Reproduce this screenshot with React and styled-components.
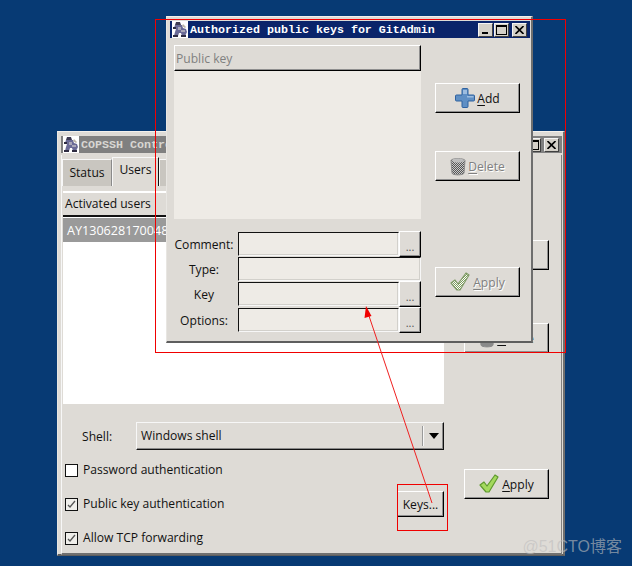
import React from "react";
import styled, { createGlobalStyle } from "styled-components";

const GlobalStyle = createGlobalStyle`
  * { box-sizing: border-box; }
  body {
    margin: 0;
    background: #073a74;
    overflow: hidden;
    font-family: "Open Sans", "DejaVu Sans", sans-serif;
    font-size: 12.1px;
    color: #111;
  }
`;

const Desktop = styled.div`
  position: relative;
  width: 632px;
  height: 566px;
  overflow: hidden;
  background: #073a74;
`;

// windows sit on the desktop at their own place
const Window = styled.div`
  position: absolute;
  left: ${(p) => p.$x}px;
  top: ${(p) => p.$y}px;
  width: ${(p) => p.$w}px;
  height: ${(p) => p.$h}px;
  padding: 4px 1px 3px 3px;
  background: #dedbd6;
  border-top: 1px solid #f2f0ec;
  border-left: 1px solid #e8e6e2;
  border-right: 2px solid #6e6e6e;
  border-bottom: 2px solid #5e5e5e;
`;

const TitleBar = styled.div`
  display: flex;
  align-items: center;
  height: 17px;
  padding-right: 3px;
  background: ${(p) => (p.$active ? "#0a246a" : "#808080")};
  overflow: hidden;
`;

const TitleText = styled.span`
  flex: 1;
  margin-left: 2px;
  font-family: "Liberation Mono", monospace;
  font-size: 11.67px;
  font-weight: 700;
  white-space: nowrap;
  color: ${(p) => (p.$active ? "#ffffff" : "#d8d6d2")};
`;

const CtlButton = styled.div`
  display: flex;
  align-items: center;
  justify-content: center;
  width: 15px;
  height: 14px;
  margin-left: ${(p) => p.$gap || 0}px;
  background: #d4d0c8;
  border: 1px solid;
  border-color: #f4f4f4 #404040 #404040 #f4f4f4;
`;

const Frame = styled.div`
  height: 400px;
  border-left: 1px solid #f7f7f7;
  border-right: 1px solid #808080;
  border-bottom: 2px solid #707070;
`;

const Tabs = styled.div`
  display: flex;
  align-items: flex-end;
  height: 31px;
  margin-top: 2px;
`;

const Tab = styled.div`
  display: flex;
  align-items: center;
  justify-content: center;
  width: ${(p) => p.$w}px;
  height: ${(p) => (p.$current ? 29 : 27)}px;
  padding-bottom: ${(p) => (p.$current ? 5 : 2)}px;
  background: ${(p) => (p.$current ? "#dedbd6" : "#c9c6c0")};
  border-top: 1px solid #f7f7f7;
  border-left: 1px solid #f7f7f7;
  border-right: ${(p) => (p.$current ? "1px solid #111" : "1px solid #8a8a8a")};
`;

const MainGrid = styled.div`
  display: grid;
  grid-template-columns: 381px 85px;
  column-gap: 20px;
  margin: 5px 0 0 1px;
`;

const UserList = styled.div`
  height: 213px;
  padding: 2px 0 0;
  background: #ffffff;
`;

const ListHead = styled.div`
  display: flex;
  align-items: center;
  height: 24px;
  padding: 0 0 2px 2px;
  background: #dedbd6;
  border-bottom: 2px solid #111;
`;

const ListRow = styled.div`
  display: flex;
  align-items: center;
  height: 24px;
  margin-top: 1px;
  padding-left: 4px;
  background: #9a9a9a;
  color: #ffffff;
  font-size: 12.6px;
  white-space: nowrap;
  overflow: hidden;
`;

const ShellRow = styled.div`
  display: flex;
  align-items: center;
  height: 28px;
  margin-top: 18px;
  padding-left: 19px;
`;

const ShellLabel = styled.span`
  width: 54px;
`;

const Combo = styled.div`
  display: flex;
  align-items: center;
  justify-content: space-between;
  flex: 1;
  height: 28px;
  padding: 0 0 1px 4px;
  background: #dedbd6;
  border: 1px solid;
  border-color: #f7f7f7 #111 #111 #f7f7f7;
  box-shadow: inset 0 -1px 0 #8a8a8a, inset -1px 0 0 #8a8a8a;
`;

const ComboArrow = styled.div`
  display: flex;
  align-items: center;
  justify-content: center;
  width: 20px;
  height: 20px;
  border-left: 1px solid #f7f7f7;
  box-shadow: -1px 0 0 #9a9a9a;

  &::after {
    content: "";
    border-left: 5.5px solid transparent;
    border-right: 5.5px solid transparent;
    border-top: 6px solid #000;
  }
`;

const CheckRows = styled.div`
  margin-top: 3px;
`;

const CheckRow = styled.div`
  display: flex;
  align-items: center;
  height: 34px;
  padding-left: 2px;
`;

const CheckBox = styled.div`
  display: flex;
  align-items: center;
  justify-content: center;
  width: 13px;
  height: 13px;
  margin-right: 5px;
  background: ${(p) => (p.$on ? "#efeeea" : "#ffffff")};
  border: 1px solid #111;
`;

const CheckLabel = styled.span`
  flex: 1;
  padding-bottom: 2px;
`;

const Button = styled.div`
  display: flex;
  align-items: center;
  justify-content: center;
  gap: ${(p) => p.$gap ?? 2}px;
  height: ${(p) => p.$h || 30}px;
  margin-top: ${(p) => p.$mt || 0}px;
  background: #dedbd6;
  border: 1px solid;
  border-color: #ffffff #000000 #000000 #ffffff;
  box-shadow: inset -1px -1px 0 #8f8f8f;
  color: ${(p) => (p.$disabled ? "#808080" : "#111")};
  text-shadow: ${(p) => (p.$disabled ? "1px 1px 0 #ffffff" : "none")};
  u { text-underline-offset: 2px; }
`;

const KeysButton = styled(Button)`
  width: 47px;
`;

const ButtonColumn = styled.div`
  display: flex;
  flex-direction: column;
`;

const KeyGrid = styled.div`
  display: grid;
  grid-template-columns: 247px 85px;
  column-gap: 14px;
  margin-top: 7px;
  margin-left: 4px;
`;

const KeyHead = styled.div`
  display: flex;
  align-items: center;
  height: 26px;
  padding-left: 1px;
  background: #dedbd6;
  color: #808080;
  border: 1px solid;
  border-color: #ffffff #000000 #000000 #ffffff;
  box-shadow: inset -1px -1px 0 #8f8f8f;
`;

const KeyList = styled.div`
  height: 148px;
  background: #eeebe6;
`;

const Fields = styled.div`
  display: grid;
  grid-template-columns: 64px 161px 22px;
  grid-template-rows: 26px 24px 26px 26px;
  margin-top: 12px;
`;

const FieldLabel = styled.span`
  align-self: center;
  justify-self: center;
  padding-right: 4px;
`;

const FieldInput = styled.div`
  grid-column: ${(p) => (p.$wide ? "span 2" : "auto")};
  align-self: center;
  height: 24px;
  background: #eeebe6;
  border: 1px solid;
  border-color: #111 #f7f7f7 #f7f7f7 #111;
  box-shadow: inset -1px -1px 0 #d2d0cb;
`;

const DotsButton = styled.div`
  display: flex;
  justify-content: center;
  align-items: flex-end;
  height: 26px;
  padding-bottom: 3px;
  font-size: 11px;
  line-height: 13px;
  color: #555;
  background: #dedbd6;
  border: 1px solid;
  border-color: #ffffff #000000 #000000 #ffffff;
  box-shadow: inset -1px -1px 0 #8f8f8f;
`;

// annotation drawn over the screenshot
const RedBox = styled.div`
  position: absolute;
  left: ${(p) => p.$x}px;
  top: ${(p) => p.$y}px;
  width: ${(p) => p.$w}px;
  height: ${(p) => p.$h}px;
  border: 1px solid #f00000;
  pointer-events: none;
`;

const Overlay = styled.svg`
  position: absolute;
  left: 0;
  top: 0;
`;

const Watermark = styled.div`
  position: absolute;
  right: 10px;
  bottom: 9px;
  font-family: "Liberation Sans", "Noto Sans CJK SC", sans-serif;
  font-size: 16px;
  color: rgba(190, 190, 190, 0.62);
  white-space: nowrap;
`;

const Mascot = () => (
  <svg width="16" height="17" viewBox="0 0 16 17" style={{ flex: "none", marginLeft: 2 }}>
    <rect width="16" height="17" fill="#ffffff" />
    <path d="M4 1h4l1 3H3z" fill="#3d3a52" />
    <path d="M3 4h7l1 3 3 1 1 3-2 4h-3l-1-3H7l-1 3H2l1-4 1-3-2-1z" fill="#6a6a96" />
    <path d="M6 6h3v3H6zM9 9h4v2H9z" fill="#a9a6b8" />
    <path d="M1 6h3v2H1zM1 14h5v2H1zM9 14h5v2H9z" fill="#2e2c42" />
    <path d="M11 3l3 3-1 1-3-2z" fill="#b9b2a4" />
  </svg>
);

const MinGlyph = () => (
  <svg width="9" height="9" viewBox="0 0 9 9"><rect x="1" y="7" width="6" height="2" fill="#000" /></svg>
);
const MaxGlyph = () => (
  <svg width="11" height="10" viewBox="0 0 11 10">
    <rect x="0.5" y="1" width="10" height="8.5" fill="none" stroke="#000" />
    <rect x="0" y="0" width="11" height="2" fill="#000" />
  </svg>
);
const CloseGlyph = () => (
  <svg width="9" height="8" viewBox="0 0 9 8">
    <path d="M0.5 0L8.5 8M8.5 0L0.5 8" stroke="#000" strokeWidth="1.6" fill="none" />
  </svg>
);

const Controls = () => (
  <>
    <CtlButton><MinGlyph /></CtlButton>
    <CtlButton $gap={1}><MaxGlyph /></CtlButton>
    <CtlButton $gap={3}><CloseGlyph /></CtlButton>
  </>
);

const PlusIcon = () => (
  <svg width="20" height="20" viewBox="0 0 20 20">
    <path d="M7 1.500Q7 .5 8 .5h4q1 0 1 1V7h5.500q1 0 1 1v4q0 1-1 1H13v5.500q0 1-1 1H8q-1 0-1-1V13H1.500q-1 0-1-1V8q0-1 1-1H7z" fill="#5f8fc4" stroke="#2f62a0" />
    <path d="M8 2h4v6h6.500v1.500H12V6H8z" fill="#9dbde0" />
  </svg>
);

const CheckIcon = ({ muted }) => (
  <svg width="21" height="20" viewBox="0 0 21 20">
    <defs>
      <pattern id="dither" width="2" height="2" patternUnits="userSpaceOnUse">
        <rect width="2" height="2" fill="#ffffff" />
        <rect width="1" height="1" fill="#7f9f60" />
        <rect x="1" y="1" width="1" height="1" fill="#7f9f60" />
      </pattern>
    </defs>
    <path
      d="M1 11l4-3 3 4L16 1l3 2-9 15H7z"
      fill={muted ? "url(#dither)" : "#a4d95e"}
      stroke={muted ? "#7e9a66" : "#5f9a2e"}
      strokeWidth="1.2"
      strokeLinejoin="round"
    />
  </svg>
);

const DrumIcon = ({ muted }) => (
  <svg width="16" height="19" viewBox="0 0 16 19">
    <defs>
      <pattern id="drumdots" width="2" height="2" patternUnits="userSpaceOnUse">
        <rect width="2" height="2" fill="#c8c8c8" />
        <rect width="1" height="1" fill="#555" />
        <rect x="1" y="1" width="1" height="1" fill="#555" />
      </pattern>
    </defs>
    <path d="M1 3.500C1 1 15 1 15 3.500L14 16C14 18.500 2 18.500 2 16z" fill={muted ? "url(#drumdots)" : "#8a8a8a"} stroke="#8a8a8a" />
    <ellipse cx="8" cy="3.500" rx="6" ry="2" fill="#bdbdbd" />
  </svg>
);

const TickMark = () => (
  <svg width="9" height="9" viewBox="0 0 9 9">
    <path d="M1 5l2 2 5-6" stroke="#555" strokeWidth="1.3" fill="none" />
  </svg>
);

const Check = ({ on, label, children }) => (
  <CheckRow>
    <CheckBox $on={on}>{on && <TickMark />}</CheckBox>
    <CheckLabel>{label}</CheckLabel>
    {children}
  </CheckRow>
);

const MainWindow = () => (
  <Window $x={57} $y={131} $w={508} $h={425}>
    <TitleBar>
      <Mascot />
      <TitleText>COPSSH Control Panel</TitleText>
      <Controls />
    </TitleBar>
    <Frame>
      <Tabs>
        <Tab $w={50}>Status</Tab>
        <Tab $w={47} $current>Users</Tab>
        <Tab $w={60}>Options</Tab>
      </Tabs>
      <MainGrid>
        <div>
          <UserList>
            <ListHead>Activated users</ListHead>
            <ListRow>AY130628170048</ListRow>
          </UserList>
          <ShellRow>
            <ShellLabel>Shell:</ShellLabel>
            <Combo>
              Windows shell
              <ComboArrow />
            </Combo>
          </ShellRow>
          <CheckRows>
            <Check label="Password authentication" />
            <Check on label="Public key authentication">
              <KeysButton $h={26}>Keys...</KeysButton>
            </Check>
            <Check on label="Allow TCP forwarding" />
          </CheckRows>
        </div>
        <ButtonColumn>
          <Button $mt={49}><PlusIcon /><span><u>A</u>dd</span></Button>
          <Button $mt={53}><DrumIcon /><span><u>D</u>elete</span></Button>
          <Button $mt={116}><CheckIcon /><span><u>A</u>pply</span></Button>
        </ButtonColumn>
      </MainGrid>
    </Frame>
  </Window>
);

const KeysWindow = () => (
  <Window $x={166} $y={16} $w={367} $h={327}>
    <TitleBar $active>
      <Mascot />
      <TitleText $active>Authorized public keys for GitAdmin</TitleText>
      <Controls />
    </TitleBar>
    <KeyGrid>
      <div>
        <KeyHead>Public key</KeyHead>
        <KeyList />
        <Fields>
          <FieldLabel>Comment:</FieldLabel>
          <FieldInput />
          <DotsButton>...</DotsButton>
          <FieldLabel>Type:</FieldLabel>
          <FieldInput $wide />
          <FieldLabel>Key</FieldLabel>
          <FieldInput />
          <DotsButton>...</DotsButton>
          <FieldLabel>Options:</FieldLabel>
          <FieldInput />
          <DotsButton>...</DotsButton>
        </Fields>
      </div>
      <ButtonColumn>
        <Button $mt={38}><PlusIcon /><span><u>A</u>dd</span></Button>
        <Button $mt={38} $disabled><DrumIcon muted /><span><u>D</u>elete</span></Button>
        <Button $mt={86} $disabled><CheckIcon muted /><span><u>A</u>pply</span></Button>
      </ButtonColumn>
    </KeyGrid>
  </Window>
);

export default function App() {
  return (
    <Desktop>
      <GlobalStyle />
      <MainWindow />
      <KeysWindow />
      <RedBox $x={155} $y={19} $w={411} $h={334} />
      <RedBox $x={397} $y={484} $w={51} $h={47} />
      <Overlay width="632" height="566" viewBox="0 0 632 566">
        <path d="M432 503L368 313" stroke="#f02020" strokeWidth="1" fill="none" />
        <path d="M366 306L371.500 316L364.500 318z" fill="#f00000" />
      </Overlay>
      <Watermark>@51CTO博客</Watermark>
    </Desktop>
  );
}
